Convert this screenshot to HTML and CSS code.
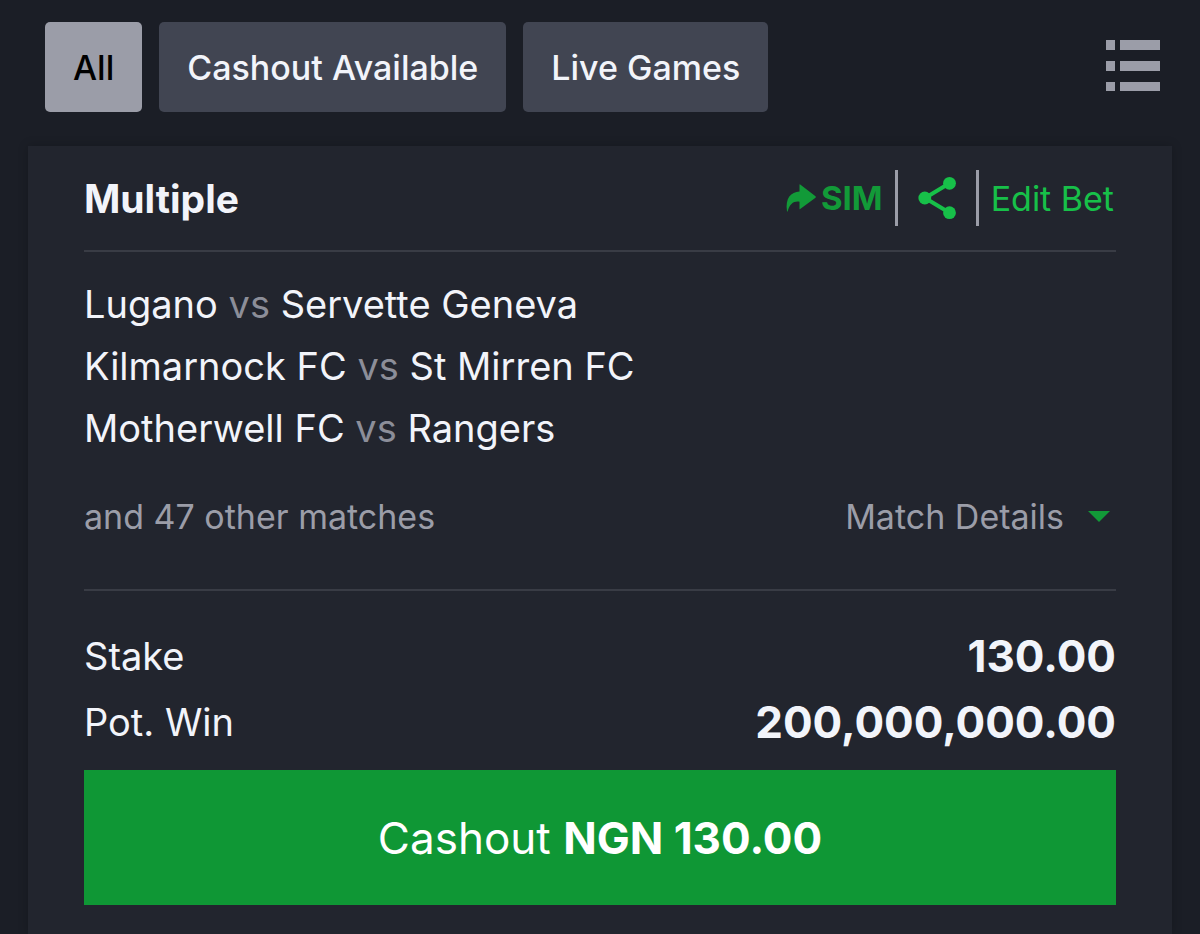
FILE: index.html
```html
<!DOCTYPE html>
<html lang="en">
<head>
<meta charset="utf-8">
<meta name="viewport" content="width=device-width, initial-scale=1">
<title>Cashout bets</title>
<link rel="stylesheet" href="styles.css">
</head>
<body>
<header class="toolbar">
  <nav class="filters" aria-label="Bet filters">
    <button class="filter filter-active" type="button" aria-pressed="true">All</button>
    <button class="filter" type="button">Cashout Available</button>
    <button class="filter" type="button">Live Games</button>
  </nav>
  <button class="icon-button" type="button" aria-label="List view">
    <svg width="56" height="52" viewBox="0 0 56 52" fill="currentColor" shape-rendering="crispEdges" aria-hidden="true">
      <path d="M1 0h9v10H1zM15 0h40v10H15zM1 21h9v10H1zM15 21h40v10H15zM1 42h9v9H1zM15 42h40v9H15z"/>
    </svg>
  </button>
</header>
<main class="bet">
  <div class="bet-header">
    <h1 class="bet-title">Multiple</h1>
    <div class="actions">
      <button class="action action-sim" type="button">
        <svg width="32" height="28" viewBox="0 0 32 28" fill="currentColor" aria-hidden="true">
          <path d="M14.500 0.700Q14.500 0 15.200 0.600L30.500 12.300Q31.300 13 30.500 13.700L15.200 25Q14.500 25.500 14.500 24.700V17.800C9 16.800 4.500 20 2.700 27.300Q2.300 28 2 27.200C0 14 6 7.800 14.500 7.400Z"/>
        </svg>
        SIM
      </button>
      <button class="action action-share" type="button" aria-label="Share">
        <svg width="40" height="44" viewBox="0 0 40 44" aria-hidden="true">
          <path d="M32.500 7.300 8 22l24.500 14.700" fill="none" stroke="currentColor" stroke-width="4"/>
          <g fill="currentColor"><circle cx="32.500" cy="7.300" r="6.400"/><circle cx="7.800" cy="22" r="6.400"/><circle cx="32.500" cy="36.700" r="6.400"/></g>
        </svg>
      </button>
      <button class="action action-edit" type="button">Edit Bet</button>
    </div>
  </div>
  <section class="matches">
    <ul class="match-list">
      <li>Lugano <span class="versus">vs</span> Servette Geneva</li>
      <li>Kilmarnock FC <span class="versus">vs</span> St Mirren FC</li>
      <li>Motherwell FC <span class="versus">vs</span> Rangers</li>
    </ul>
    <div class="more">
      <span>and 47 other matches</span>
      <button class="details" type="button">
        Match Details
        <svg width="22" height="12" viewBox="0 0 22 12" fill="currentColor" class="caret" aria-hidden="true"><path d="M0 0h22L11 11z"/></svg>
      </button>
    </div>
  </section>
  <dl class="totals">
    <div class="total"><dt>Stake</dt><dd>130.00</dd></div>
    <div class="total"><dt>Pot. Win</dt><dd>200,000,000.00</dd></div>
  </dl>
  <button class="cashout" type="button">Cashout <strong>NGN 130.00</strong></button>
</main>
</body>
</html>
```
FILE: styles.css
```css
* {
  box-sizing: border-box;
}

body {
  display: flex;
  flex-direction: column;
  min-height: 100vh;
  margin: 0;
  background: #1b1e26;
  color: #f2f4fa;
  font-family: Inter, "Liberation Sans", sans-serif;
  font-size: 38px;
  font-optical-sizing: none;
}

button {
  margin: 0;
  padding: 0;
  border: 0;
  background: none;
  color: inherit;
  font: inherit;
  cursor: pointer;
}

svg {
  display: block;
  flex: none;
}

.toolbar {
  display: flex;
  align-items: flex-start;
  justify-content: space-between;
  padding: 22px 39px 34px 45px;
}

.filters {
  display: flex;
  gap: 17px;
}

.filter {
  height: 90px;
  padding: 0 28px;
  border-radius: 5px;
  background: #414552;
  font-size: 34px;
  font-weight: 500;
}

.filter-active {
  background: #9b9da8;
  color: #000;
}

.icon-button {
  padding-top: 18px;
  color: #9b9da8;
}

.bet {
  flex: 1;
  margin: 0 28px;
  padding: 0 56px 29px;
  background: #22252e;
  box-shadow: 0 0 10px rgba(0, 0, 0, 0.2);
}

.bet-header {
  display: flex;
  align-items: center;
  justify-content: space-between;
  height: 106px;
  border-bottom: 2px solid #393c45;
}

.bet-title {
  margin: 0;
  font-size: 39px;
  font-weight: 700;
}

.actions {
  display: flex;
  align-items: center;
}

.action {
  display: flex;
  align-items: center;
  height: 56px;
  color: #17c049;
  font-size: 34px;
}

.action-sim {
  gap: 4px;
  padding-right: 12px;
  color: #129a38;
  font-size: 33px;
  font-weight: 700;
}

.action-share {
  padding: 0 19px;
  border: solid #9b9da8;
  border-width: 0 3px;
}

.action-edit {
  padding: 0 2px 0 12px;
}

.matches {
  padding: 21px 0 41px;
  border-bottom: 2px solid #393c45;
}

.match-list {
  margin: 0 0 27px;
  padding: 0;
  list-style: none;
  line-height: 62px;
}

.versus {
  color: #8c8e99;
}

.more {
  display: flex;
  align-items: center;
  justify-content: space-between;
  color: #9b9da8;
  font-size: 34px;
  line-height: 62px;
}

.details {
  display: flex;
  align-items: center;
  gap: 24px;
  padding-right: 6px;
}

.caret {
  color: #129a38;
}

.totals {
  margin: 32px 0 15px;
  line-height: 66px;
}

.total {
  display: flex;
  justify-content: space-between;
}

.total dd {
  margin: 0;
  font-size: 44px;
  font-weight: 700;
}

.cashout {
  display: block;
  width: 100%;
  height: 135px;
  background: #0f9735;
  color: #fff;
  font-size: 44px;
}

.cashout strong {
  font-weight: 700;
}
```
